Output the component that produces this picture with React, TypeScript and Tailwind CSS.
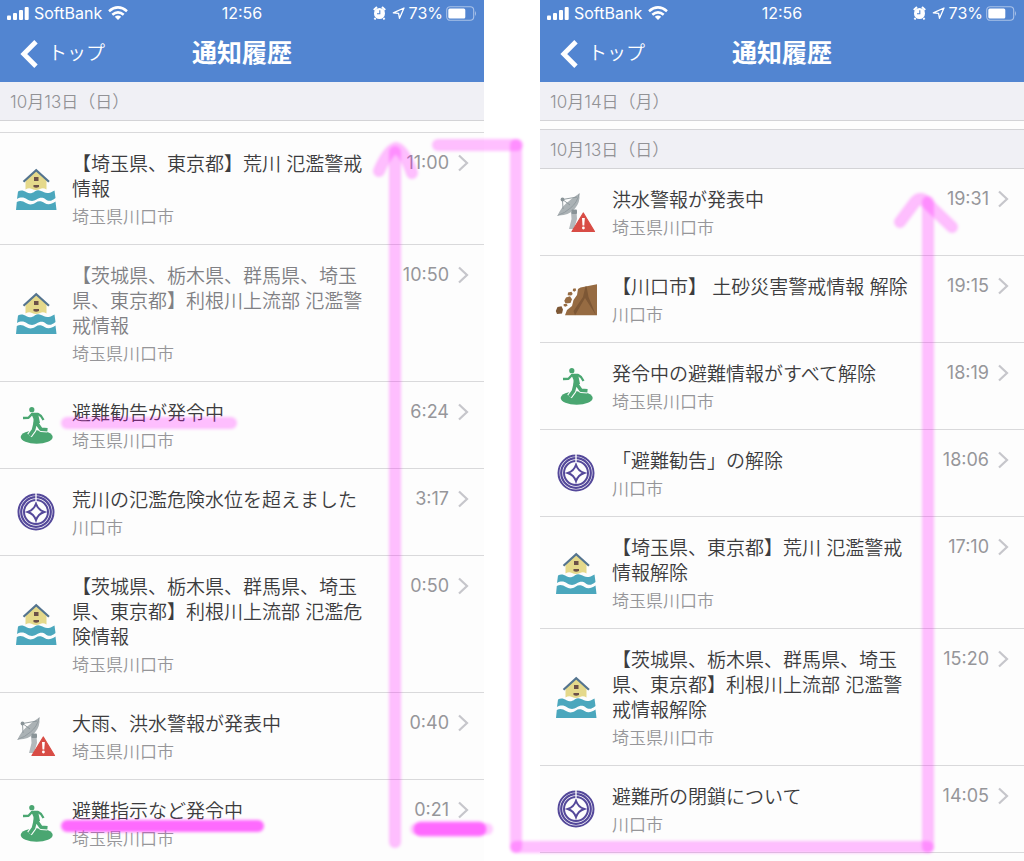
import clsx from 'clsx';

type IconKind = 'flood' | 'evacuate' | 'city' | 'radar' | 'landslide';

interface Notice {
  icon: IconKind;
  title: string;
  area: string;
  time: string;
  read?: boolean;
}

const leftNotices: Notice[] = [
  { icon: 'flood', title: '【埼玉県、東京都】荒川 氾濫警戒情報', area: '埼玉県川口市', time: '11:00' },
  {
    icon: 'flood',
    title: '【茨城県、栃木県、群馬県、埼玉県、東京都】利根川上流部 氾濫警戒情報',
    area: '埼玉県川口市',
    time: '10:50',
    read: true,
  },
  { icon: 'evacuate', title: '避難勧告が発令中', area: '埼玉県川口市', time: '6:24' },
  { icon: 'city', title: '荒川の氾濫危険水位を超えました', area: '川口市', time: '3:17' },
  {
    icon: 'flood',
    title: '【茨城県、栃木県、群馬県、埼玉県、東京都】利根川上流部 氾濫危険情報',
    area: '埼玉県川口市',
    time: '0:50',
  },
  { icon: 'radar', title: '大雨、洪水警報が発表中', area: '埼玉県川口市', time: '0:40' },
  { icon: 'evacuate', title: '避難指示など発令中', area: '埼玉県川口市', time: '0:21' },
];

const rightNotices: Notice[] = [
  { icon: 'radar', title: '洪水警報が発表中', area: '埼玉県川口市', time: '19:31' },
  { icon: 'landslide', title: '【川口市】 土砂災害警戒情報 解除', area: '川口市', time: '19:15' },
  { icon: 'evacuate', title: '発令中の避難情報がすべて解除', area: '埼玉県川口市', time: '18:19' },
  { icon: 'city', title: '「避難勧告」の解除', area: '川口市', time: '18:06' },
  { icon: 'flood', title: '【埼玉県、東京都】荒川 氾濫警戒情報解除', area: '埼玉県川口市', time: '17:10' },
  {
    icon: 'flood',
    title: '【茨城県、栃木県、群馬県、埼玉県、東京都】利根川上流部 氾濫警戒情報解除',
    area: '埼玉県川口市',
    time: '15:20',
  },
  { icon: 'city', title: '避難所の閉鎖について', area: '川口市', time: '14:05' },
];

function FloodIcon() {
  return (
    <>
      <path d="M10.500 12 L21.200 2.500 L31.500 12 V21.500 Q28 19.500 25 21 Q21 23 17 21 Q14 19.500 10.500 21.500 Z" fill="#e5d98b" />
      <path d="M8.500 13.800 L21.200 2.200 L34 13.800" fill="none" stroke="#54748f" strokeWidth="2.200" />
      <rect x="19" y="9" width="4.500" height="4" fill="#6b5048" />
      <path d="M18.500 17 h5.500 v2 q-3 1.600 -5.500 0 Z" fill="#6b5048" />
      <path
        d="M3 23.500 C6 22 8.500 22.500 11.500 24.300 S17 25.500 20 23.300 S26 22.700 29 24.300 S35.500 25 39.500 22.500 L40.500 30 C36.500 33.500 33.500 33.500 30.500 31.200 S24.500 29.500 21.500 31.500 S15 33.300 12 31.200 S5.500 28.800 2 31 Z"
        fill="#4ba7bd"
      />
      <path
        d="M1.800 34 C5 32.200 8 33 11 35 S17.500 36.800 20.500 34.700 S26.500 33 29.500 35 S36 36.800 40.500 33.500 L41.500 42 H1 Z"
        fill="#4ba7bd"
      />
    </>
  );
}

function EvacuateIcon() {
  const legs = 'M20.500 18 L18.500 26 L14.500 31.500 M21 18 L26 25.200 L32.500 25.700';
  return (
    <>
      <ellipse cx="21.700" cy="33" rx="16" ry="6.800" fill="#4aa671" />
      <path d={legs} fill="none" stroke="#fdfdfd" strokeWidth="5.600" strokeLinejoin="round" />
      <path d={legs} fill="none" stroke="#4aa671" strokeWidth="3.600" strokeLinejoin="round" />
      <circle cx="16.800" cy="5.700" r="2.600" fill="#4aa671" />
      <path d="M16 9 L23 9 L25 19 L18.500 20.500 L18.500 15 Z" fill="#4aa671" />
      <path
        d="M8 14 L13.500 13.800 L17 10 L23 10 L26 12 L28.500 16"
        fill="none"
        stroke="#4aa671"
        strokeWidth="2.300"
        strokeLinejoin="round"
      />
    </>
  );
}

function CityIcon() {
  return (
    <>
      <g fill="none" stroke="#54489a">
        <circle cx="21" cy="21" r="17.500" strokeWidth="2" />
        <circle cx="21" cy="21" r="14.800" strokeWidth="2.200" />
        <circle cx="21" cy="21" r="12" strokeWidth="2" />
        <path d="M21 12.700 Q23 19 29.300 21 Q23 23 21 29.300 Q19 23 12.700 21 Q19 19 21 12.700 Z" strokeWidth="1.900" />
      </g>
      <path d="M21 2 V11" stroke="#fdfdfd" strokeWidth="1.400" />
    </>
  );
}

function RadarIcon() {
  return (
    <>
      <path d="M24.300 2.500 Q25.500 11 20 17.500 Q13.500 25 2.500 24.500 Q6 17 11 12.500 Q17 7 24.300 2.500 Z" fill="#abb2b5" />
      <path d="M24.300 2.500 Q22 12 15.500 17 Q10 22 2.500 24.500" fill="none" stroke="#8d969b" strokeWidth="0.800" />
      <path d="M7.500 8.500 L22 6 M7.500 8.500 L8 18 M7.500 8.500 L15 14" fill="none" stroke="#899397" strokeWidth="0.900" />
      <circle cx="7.500" cy="8.500" r="1.900" fill="#899397" />
      <path d="M16 21 L21.500 20 L22 28 L19 38 H14 L16.500 28 Z" fill="#b3b9bc" />
      <rect x="16.500" y="18.500" width="5.500" height="4.500" rx="1" fill="#899397" />
      <path
        d="M28.300 22 L39.500 40.500 H17 Z"
        fill="#d84c45"
        stroke="#d84c45"
        strokeWidth="1.200"
        strokeLinejoin="round"
      />
      <path d="M27 27 h2.800 l-0.500 7.500 h-1.800 Z" fill="#fff" />
      <circle cx="28.400" cy="37" r="1.400" fill="#fff" />
    </>
  );
}

function LandslideIcon() {
  return (
    <>
      <path d="M42 6.300 V37.300 H10 L12 32 L17 28 L18.500 22 L22 17 L23 11 L25.500 9.500 Z" fill="#966b42" />
      <path d="M30.500 8.500 L28 19 L18.500 33 L20 37.300 L30 20 L37 31 L41 37.300 L33.500 19 L31.500 8.300 Z" fill="#7d5735" />
      <g fill="#966b42">
        <path d="M11 19.500 l4 -1.200 2 3 -1.500 3.800 -5 0.500 -1.200 -2.800 Z" />
        <path d="M13 14.500 l3.500 -0.800 1.200 2.200 -1.500 1.700 -3.500 -0.300 Z" />
        <path d="M18 10.800 l2.500 -0.500 0.700 2 -1.800 1.400 -1.600 -0.900 Z" />
        <path d="M8.700 26 l3 0 1 1.600 -2.200 1.200 -1.800 -0.900 Z" />
      </g>
      <path d="M2.500 29 l4 -0.800 1.500 3.200 -1 4 -5 0.500 -1.200 -3 Z" fill="#7d5735" />
    </>
  );
}

const icons = {
  flood: FloodIcon,
  evacuate: EvacuateIcon,
  city: CityIcon,
  radar: RadarIcon,
  landslide: LandslideIcon,
};

function StatusBar() {
  return (
    <div className="grid h-[26px] grid-cols-[1fr_auto_1fr] items-center px-[7px] text-base leading-5">
      <div className="flex items-center">
        <svg className="h-[13px] w-[22px]" viewBox="0 0 22 13" fill="#fff">
          <rect x="0" y="8.500" width="4" height="4.500" rx="1" />
          <rect x="6" y="6" width="4" height="7" rx="1" />
          <rect x="12" y="3" width="4" height="10" rx="1" />
          <rect x="17.700" y="0" width="4" height="13" rx="1" />
        </svg>
        <span className="ml-[5px]">SoftBank</span>
        <svg className="ml-1.5 h-[14px] w-5" viewBox="0 0 20 14">
          <g fill="none" stroke="#fff" strokeWidth="2.600">
            <path d="M1 5.200 Q10 -2.400 19 5.200" />
            <path d="M4.300 8.800 Q10 4 15.700 8.800" />
          </g>
          <path d="M10 14 L6.800 10.800 Q10 8.400 13.200 10.800 Z" fill="#fff" />
        </svg>
      </div>
      <span>12:56</span>
      <div className="flex items-center justify-end">
        <svg className="h-[14px] w-[13px]" viewBox="0 0 13 14">
          <circle cx="6.500" cy="7.500" r="5.500" fill="#fff" />
          <path d="M0.800 4 L4 1 M12.200 4 L9 1 M2.500 12 L1.500 13.500 M10.500 12 L11.500 13.500" stroke="#fff" strokeWidth="2" />
          <path d="M6.800 4.300 V7.800 H4" fill="none" stroke="#5285d1" strokeWidth="1.100" />
        </svg>
        <svg className="ml-1.5 h-3 w-[13px]" viewBox="0 0 13 12">
          <path
            d="M1.300 5.800 L12 1 L7.500 11.300 L6.600 6.400 Z"
            fill="none"
            stroke="#fff"
            strokeWidth="1.300"
            strokeLinejoin="round"
          />
        </svg>
        <span className="ml-1">73%</span>
        <svg className="ml-[3px] h-[15px] w-[31px]" viewBox="0 0 31 15">
          <rect x="0.700" y="0.700" width="27" height="13.600" rx="3.500" fill="none" stroke="#a9c2e8" strokeWidth="1.100" />
          <rect x="2.300" y="2.500" width="17" height="10" rx="1.500" fill="#fff" />
          <path d="M29 5 Q31 7.500 29 10 Z" fill="#a9c2e8" />
        </svg>
      </div>
    </div>
  );
}

function AppHeader() {
  return (
    <header className="bg-[#5285d1] text-white">
      <StatusBar />
      <div className="grid h-14 grid-cols-[1fr_auto_1fr] items-center px-5">
        <button type="button" className="flex items-center justify-self-start">
          <svg className="h-7 w-[18px]" viewBox="0 0 18 28" fill="none" stroke="#fff" strokeWidth="4.800">
            <path d="M16 1.800 L3.800 14 L16 26.200" />
          </svg>
          <span className="ml-2.5 text-[19px] font-[350] leading-6">トップ</span>
        </button>
        <h1 className="pb-0.5 text-[25px] font-bold leading-8">通知履歴</h1>
      </div>
    </header>
  );
}

function DateHeading({ children, divided }: { children: string; divided?: boolean }) {
  return (
    <h2
      className={clsx(
        'border-b border-[#d3d3d6] bg-[#f0f0f5] px-2.5 pt-0.5 text-[17px] font-[350] leading-9 text-[#929296]',
        divided && 'mt-2 border-t',
      )}
    >
      {children}
    </h2>
  );
}

function NoticeRow({ notice }: { notice: Notice }) {
  const Icon = icons[notice.icon];

  return (
    <li className="border-b border-[#d9d9db]">
      <a href="#" className="flex px-[15px]">
        <svg className="h-[42px] w-[42px] shrink-0 self-center" viewBox="0 0 42 42">
          <Icon />
        </svg>
        <div className="ml-[15px] min-w-0 flex-1 pb-[15px] pt-[19px] font-[350]">
          <p className={clsx('text-[19px] leading-[25px]', notice.read ? 'text-[#808084]' : 'text-[#3c3c3e]')}>
            {notice.title}
          </p>
          <p className="mt-[3px] text-[17px] leading-6 text-[#969699]">{notice.area}</p>
        </div>
        <div className="flex w-[96px] shrink-0 items-center justify-end self-start pt-[18px]">
          <time className="text-lg leading-6 text-[#96969a]">{notice.time}</time>
          <svg className="ml-2 h-[18px] w-3" viewBox="0 0 12 18" fill="none" stroke="#c6c6cb" strokeWidth="2.200">
            <path d="M2 1.500 L10 9 L2 16.500" />
          </svg>
        </div>
      </a>
    </li>
  );
}

function NoticeList({ notices }: { notices: Notice[] }) {
  return (
    <ul>
      {notices.map((notice) => (
        <NoticeRow key={notice.time} notice={notice} />
      ))}
    </ul>
  );
}

// Highlighter strokes that show the reading order across both screens
function MarkerStrokes() {
  return (
    <svg
      className="pointer-events-none absolute left-0 top-0 w-full"
      viewBox="0 0 1024 861"
      fill="none"
      stroke="#ff00ff"
      strokeWidth="12"
      strokeLinecap="round"
      strokeLinejoin="round"
      aria-hidden="true"
    >
      <defs>
        <filter id="marker-soft" filterUnits="userSpaceOnUse" x="0" y="0" width="1024" height="861">
          <feGaussianBlur stdDeviation="1.700" />
        </filter>
      </defs>
      <g filter="url(#marker-soft)">
        <g strokeOpacity="0.250">
          <path d="M395 152 V842" />
          <path d="M379 171 Q388 150 396 148 Q404 150 412 173" />
          <path d="M438 145 H517" />
          <path d="M516 145 V847" />
          <path d="M516 847 H928" />
          <path d="M928 202 V847" />
          <path d="M900 222 L915 202 Q921 195 928 204 L952 227" />
          <path d="M67 423 H231" />
        </g>
        <path d="M67 826 H258" strokeOpacity="0.580" />
        <path d="M421 829 H479" strokeOpacity="0.480" strokeWidth="15" />
        <path d="M416 829 H487" strokeOpacity="0.200" strokeWidth="12" />
      </g>
    </svg>
  );
}

export default function App() {
  return (
    <main className="relative h-screen overflow-hidden bg-white font-['Inter','Noto_Sans_CJK_JP',sans-serif]" lang="ja">
      <div className="grid grid-cols-2 gap-14">
        <section className="bg-[#fdfdfd]">
          <AppHeader />
          <DateHeading>10月13日（日）</DateHeading>
          <div className="mt-[11px] border-t border-[#d9d9db]">
            <NoticeList notices={leftNotices} />
          </div>
        </section>
        <section className="bg-[#fdfdfd]">
          <AppHeader />
          <DateHeading>10月14日（月）</DateHeading>
          <DateHeading divided>10月13日（日）</DateHeading>
          <NoticeList notices={rightNotices} />
        </section>
      </div>
      <MarkerStrokes />
    </main>
  );
}
